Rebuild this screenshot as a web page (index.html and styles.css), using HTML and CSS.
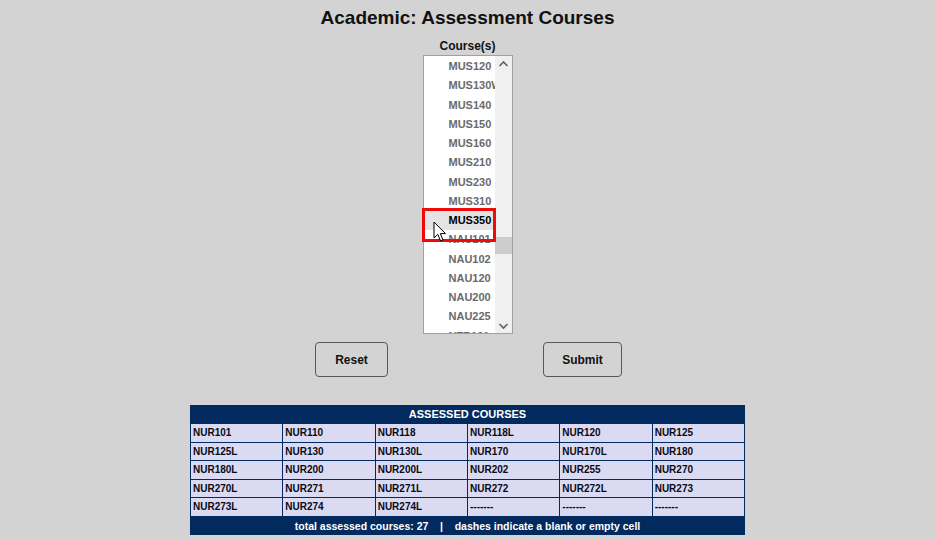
FILE: index.html
```html
<!DOCTYPE html>
<html>
<head>
<meta charset="utf-8">
<link rel="stylesheet" href="styles.css">
</head>
<body>
<div class="page">
<h1 class="title">Academic: Assessment Courses</h1>
<div class="label">Course(s)</div>
<div class="listwrap">
  <div class="listbox">
    <div class="options">
      <div class="opt">MUS120</div>
      <div class="opt">MUS130W</div>
      <div class="opt">MUS140</div>
      <div class="opt">MUS150</div>
      <div class="opt">MUS160</div>
      <div class="opt">MUS210</div>
      <div class="opt">MUS230</div>
      <div class="opt">MUS310</div>
      <div class="opt sel">MUS350</div>
      <div class="opt">NAU101</div>
      <div class="opt">NAU102</div>
      <div class="opt">NAU120</div>
      <div class="opt">NAU200</div>
      <div class="opt">NAU225</div>
      <div class="opt">NTR101</div>
    </div>
    <div class="scrollbar">
      <svg class="arrow" width="17" height="14" viewBox="0 0 17 14"><path d="M4.5 9 L8.5 5 L12.5 9" fill="none" stroke="#606060" stroke-width="1.6"/></svg>
      <div class="track"><div class="thumb"></div></div>
      <svg class="arrow" width="17" height="14" viewBox="0 0 17 14"><path d="M4.5 5 L8.5 9 L12.5 5" fill="none" stroke="#606060" stroke-width="1.6"/></svg>
    </div>
  </div>
  <div class="highlight"></div>
  <svg class="cursor" width="14" height="22" viewBox="0 0 14 22"><path d="M1 1 L1 17 L4.8 13.4 L7.6 20 L10 19 L7.3 12.6 L12.5 12.6 Z" fill="#fff" stroke="#000" stroke-width="1" stroke-linejoin="round"/></svg>
</div>
<div class="buttons">
  <button class="btn reset">Reset</button>
  <button class="btn submit">Submit</button>
</div>
<div class="table">
  <div class="thead">ASSESSED COURSES</div>
  <div class="grid">
    <div class="cell">NUR101</div><div class="cell">NUR110</div><div class="cell">NUR118</div><div class="cell">NUR118L</div><div class="cell">NUR120</div><div class="cell">NUR125</div>
    <div class="cell">NUR125L</div><div class="cell">NUR130</div><div class="cell">NUR130L</div><div class="cell">NUR170</div><div class="cell">NUR170L</div><div class="cell">NUR180</div>
    <div class="cell">NUR180L</div><div class="cell">NUR200</div><div class="cell">NUR200L</div><div class="cell">NUR202</div><div class="cell">NUR255</div><div class="cell">NUR270</div>
    <div class="cell">NUR270L</div><div class="cell">NUR271</div><div class="cell">NUR271L</div><div class="cell">NUR272</div><div class="cell">NUR272L</div><div class="cell">NUR273</div>
    <div class="cell">NUR273L</div><div class="cell">NUR274</div><div class="cell">NUR274L</div><div class="cell">-------</div><div class="cell">-------</div><div class="cell">-------</div>
  </div>
  <div class="tfoot">total assessed courses: 27 &nbsp; &nbsp;| &nbsp; &nbsp;dashes indicate a blank or empty cell</div>
</div>
</div>
</body>
</html>
```
FILE: styles.css
```css
html, body {
  margin: 0;
  padding: 0;
  background: #d3d3d3;
  font-family: "Liberation Sans", Arial, sans-serif;
  color: #111;
}
.page {
  width: 935px;
}
.title {
  margin: 6px 0 0;
  font-size: 19px;
  line-height: 24px;
  font-weight: bold;
  text-align: center;
}
.label {
  margin-top: 9px;
  font-size: 12px;
  line-height: 14px;
  font-weight: bold;
  text-align: center;
}
.listwrap {
  position: relative;
  width: 90px;
  margin: 2px auto 0;
}
.listbox {
  display: flex;
  width: 88px;
  height: 277px;
  border: 1px solid #a0a0a0;
  background: #fff;
  overflow: hidden;
}
.options {
  flex: 1;
  overflow: hidden;
  padding-top: 1px;
}
.opt {
  height: 19.25px;
  line-height: 19.25px;
  padding-left: 25px;
  font-size: 11px;
  font-weight: bold;
  color: #6a6a6a;
  white-space: nowrap;
  overflow: hidden;
}
.opt.sel {
  background: #e4e4e4;
  color: #000;
}
.scrollbar {
  width: 17px;
  display: flex;
  flex-direction: column;
  background: #f0f0f0;
}
.arrow {
  display: block;
  flex: none;
  margin-top: 1px;
}
.track {
  flex: 1;
  position: relative;
}
.thumb {
  position: absolute;
  left: 0;
  right: 0;
  top: 166px;
  height: 17px;
  background: #cdcdcd;
}
.highlight {
  position: absolute;
  left: -1px;
  top: 153px;
  width: 68px;
  height: 28px;
  border: 3px solid #f00a0a;
}
.cursor {
  position: absolute;
  left: 10px;
  top: 166px;
}
.buttons {
  display: flex;
  justify-content: center;
  gap: 155px;
  margin-top: 8px;
  padding-left: 2px;
}
.btn {
  height: 35px;
  border: 1px solid #585858;
  border-radius: 4px;
  background: #d3d3d3;
  font-family: "Liberation Sans", Arial, sans-serif;
  font-size: 12px;
  font-weight: bold;
  color: #111;
  padding: 0;
}
.reset { width: 73px; }
.submit { width: 79px; }
.table {
  width: 555px;
  margin: 28px auto 0;
  background: #022a5e;
  padding: 0 1px;
  box-sizing: border-box;
}
.thead, .tfoot {
  height: 18px;
  line-height: 18px;
  text-align: center;
  color: #fff;
  font-weight: bold;
}
.thead { font-size: 11px; }
.tfoot { font-size: 10.5px; }
.grid {
  display: grid;
  grid-template-columns: repeat(6, 1fr);
  grid-auto-rows: 17.6px;
  gap: 1px;
  padding: 1px 0;
}
.cell {
  background: #dadaf3;
  font-size: 10px;
  font-weight: bold;
  line-height: 17.6px;
  padding-left: 2px;
  color: #0a0a14;
  white-space: nowrap;
}
```
